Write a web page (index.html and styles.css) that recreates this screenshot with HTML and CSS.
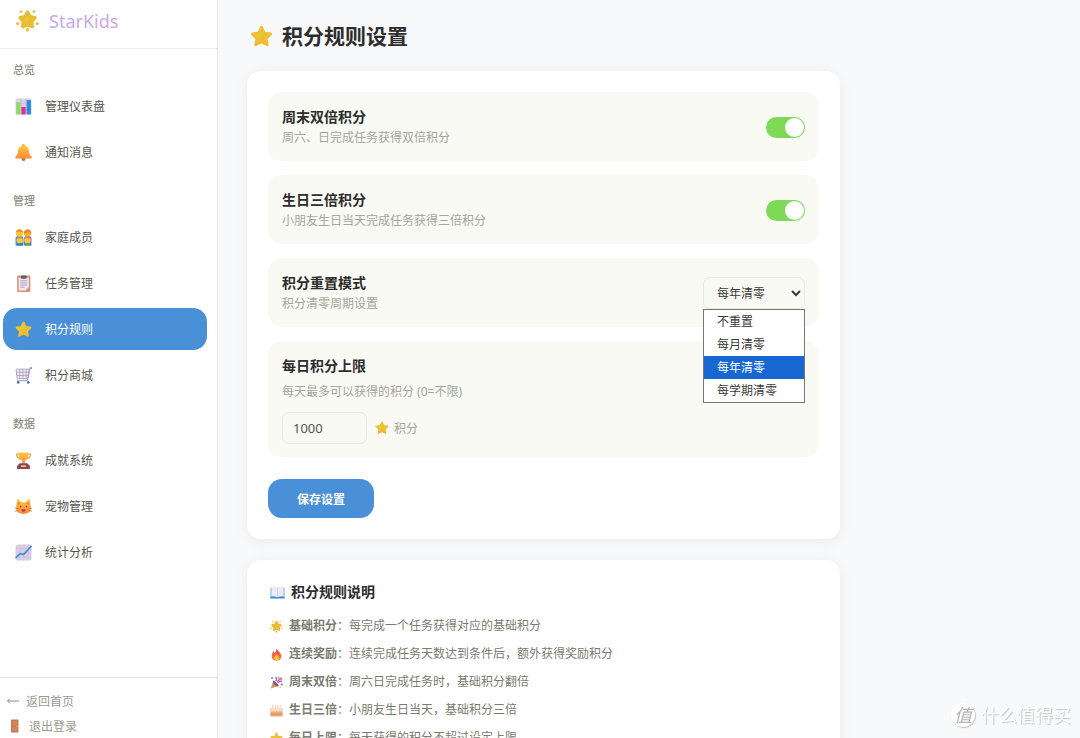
FILE: index.html
```html
<!DOCTYPE html>
<html lang="zh-CN">
<head>
    <meta charset="UTF-8">
    <meta name="viewport" content="width=device-width, initial-scale=1.0">
    <title>StarKids - 积分规则设置</title>
    <link rel="stylesheet" href="styles.css">
</head>
<body>
    <!-- 图标 -->
    <svg class="sprite" aria-hidden="true">
        <defs>
            <linearGradient id="gold" x1="0" y1="0" x2="1" y2="1">
                <stop offset="0" stop-color="#f3cf3c"/>
                <stop offset="0.6" stop-color="#e9bf33"/>
                <stop offset="1" stop-color="#f5b52a"/>
            </linearGradient>
            <linearGradient id="orange" x1="0" y1="0" x2="0" y2="1">
                <stop offset="0" stop-color="#ffc83d"/>
                <stop offset="1" stop-color="#f98a3c"/>
            </linearGradient>
            <linearGradient id="flame" x1="0" y1="0" x2="0" y2="1">
                <stop offset="0" stop-color="#e8404e"/>
                <stop offset="1" stop-color="#ff8a2b"/>
            </linearGradient>
        </defs>
        <symbol id="i-star" viewBox="0 0 32 32">
            <path d="M16 3.200l4 8 8.800 1.300-6.400 6.200 1.600 8.900-8-4.200-8 4.200 1.600-8.900-6.400-6.200 8.800-1.300z" fill="url(#gold)" stroke="#eec036" stroke-width="4" stroke-linejoin="round"/>
            <path d="M9 27l7-4 7 4" fill="none" stroke="#f3ae2d" stroke-width="1.500" stroke-linecap="round"/>
        </symbol>
        <symbol id="i-glow" viewBox="0 0 32 32">
            <path d="M16 4.500l3.500 6.300 6.800 1.400-4.600 5.200.8 7-6.500-2.800-6.500 2.800.8-7-4.600-5.200 6.800-1.400z" fill="url(#gold)" stroke="#e8bd36" stroke-width="5" stroke-linejoin="round"/>
            <g fill="#f5bd3b">
                <circle cx="7" cy="3.600" r="2"/><circle cx="25" cy="3.600" r="2"/>
                <ellipse cx="2.400" cy="20.500" rx="2.400" ry="1.900"/><ellipse cx="29.600" cy="20.500" rx="2.400" ry="1.900"/>
                <ellipse cx="16" cy="29" rx="2.200" ry="2.800"/>
            </g>
        </symbol>
        <symbol id="i-bars" viewBox="0 0 32 32">
            <rect x="1" y="1" width="30" height="30" rx="4" fill="#dcd3e6"/>
            <path d="M1 11h30M1 21h30M11 1v30M21 1v30" stroke="#b9aec9" stroke-width="1"/>
            <rect x="2" y="8" width="8" height="23" fill="#8ddc6c"/>
            <rect x="12" y="17" width="8" height="14" fill="#e0318c"/>
            <rect x="22" y="4" width="8" height="27" fill="#2a8be0"/>
        </symbol>
        <symbol id="i-bell" viewBox="0 0 32 32">
            <circle cx="16" cy="3" r="2.500" fill="#e98a35"/>
            <circle cx="16" cy="28" r="4" fill="#c9742f"/>
            <path d="M16 3C9.500 3 6 7.500 5.500 14c-.5 5-1.500 6.500-4.500 9.500-1 2 0 4 2 4h26c2 0 3-2 2-4-3-3-4-4.500-4.500-9.500C26 7.500 22.500 3 16 3z" fill="url(#orange)"/>
        </symbol>
        <symbol id="i-family" viewBox="0 0 32 32">
            <path d="M1 31V18q0-5 5-5h6q4 0 4 5v13z" fill="#2f9fd3"/>
            <path d="M17 31V18q0-5 4-5h5q5 0 5 5v13z" fill="#9a5bd0"/>
            <circle cx="8.500" cy="7.500" r="7" fill="#ffc73a"/><circle cx="23.500" cy="7.500" r="7" fill="#ffb23a"/>
            <path d="M2 6q1-6 7-5 5 0 6 5-6-3-13 0zM17 9V6q2-5 7-5 6 0 7 8-6-5-14 0z" fill="#e58a2d"/>
            <path d="M3 31q0-6 6-6t6 6z" fill="#2a7ac0"/><path d="M18 31q0-6 6-6t6 6z" fill="#3aa56b"/>
            <circle cx="9" cy="21" r="6" fill="#ffc73a"/><circle cx="23.500" cy="21" r="6" fill="#ffc73a"/>
            <path d="M3.500 19q5.500-8 11 0-5.500-3-11 0zM18 19q5.500-8 11 0-5.500-3-11 0z" fill="#d97b2c"/>
        </symbol>
        <symbol id="i-clip" viewBox="0 0 32 32">
            <rect x="4" y="1" width="25" height="31" rx="2" fill="#d8947c"/>
            <path d="M7 5h19v18l-6 6H7z" fill="#efe7f5"/>
            <path d="M26 23v6h-6z" fill="#e88b63"/>
            <rect x="11" y="1" width="11" height="6" rx="2" fill="#655b74"/>
            <path d="M10 11h13M10 15h13M10 19h13M10 23h8" stroke="#9e93b4" stroke-width="1.500"/>
        </symbol>
        <symbol id="i-cart" viewBox="0 0 32 32">
            <path d="M2 4h25l-3 18H4z" fill="#ece9f2" stroke="#a39bb3" stroke-width="1.500"/>
            <path d="M3 10h23M3 16h22M9 4v18M15 4v18M21 4v18" stroke="#a39bb3" stroke-width="1.300"/>
            <path d="M31 2h-3l-4 21q0 3-3 3H4" fill="none" stroke="#9a9bce" stroke-width="2"/>
            <circle cx="31" cy="2" r="1.500" fill="#3869c9"/>
            <circle cx="6" cy="29" r="2.500" fill="#5c68bd"/><circle cx="25" cy="29" r="2.500" fill="#5c68bd"/>
        </symbol>
        <symbol id="i-cup" viewBox="0 0 32 32">
            <path d="M8 4H3q0 8 8 9M24 4h5q0 8-8 9" fill="none" stroke="#efa23a" stroke-width="2.500"/>
            <path d="M7 1h18q1 12-6 15l-1 6h-4l-1-6Q6 13 7 1z" fill="url(#orange)"/>
            <path d="M9 21h14l5 5v6H4v-6z" fill="#87455e"/>
            <rect x="11" y="25" width="10" height="3" rx="1" fill="#f6c04a"/>
        </symbol>
        <symbol id="i-cat" viewBox="0 0 32 32">
            <path d="M4 3q1-2 3 0l5 5h8l5-5q2-2 3 0l2 15q0 12-14 12T2 18z" fill="url(#orange)"/>
            <path d="M6 7l4 4-4 2zM26 7l-4 4 4 2z" fill="#f0703c"/>
            <circle cx="10.500" cy="16" r="1.500" fill="#5a3a31"/><circle cx="21.500" cy="16" r="1.500" fill="#5a3a31"/>
            <path d="M12 21h8q0 5-4 5t-4-5z" fill="#c4304f"/>
            <path d="M0 19l7 1M0 25l7-2M32 19l-7 1M32 25l-7-2" stroke="#dd6c3c" stroke-width="1.500"/>
        </symbol>
        <symbol id="i-chart" viewBox="0 0 32 32">
            <rect x="1" y="1" width="30" height="30" rx="4" fill="#d9d0e6"/>
            <path d="M1 9h30M1 17h30M1 25h30M9 1v30M17 1v30M25 1v30" stroke="#c6bcd6" stroke-width="1"/>
            <path d="M1 26l9-8 6 2L31 4" fill="none" stroke="#3a8ed9" stroke-width="3"/>
        </symbol>
        <symbol id="i-door" viewBox="0 0 32 32">
            <rect x="8" y="1" width="17" height="30" rx="1" fill="#c8794f"/>
            <path d="M11 4h11v10H11zM11 17h11v11H11z" fill="#d18862"/>
            <circle cx="22.500" cy="16.500" r="1.500" fill="#efb36a"/>
        </symbol>
        <symbol id="i-book" viewBox="0 0 32 32">
            <path d="M1 8h30v22H1z" fill="#6cb2ea"/>
            <path d="M3 6q8-2 13 1 5-3 13-1v21q-8-1-13 2-5-3-13-2z" fill="#eeeaf7"/>
            <path d="M16 7v21" stroke="#cfc6e0" stroke-width="1.500"/>
            <path d="M1 27v4h30v-4q-9-1-15 1-6-2-15-1z" fill="#3b8ad3"/>
        </symbol>
        <symbol id="i-fire" viewBox="0 0 32 32">
            <path d="M16 1c2 6 12 9 12 19 0 7-5 11-12 11S4 27 4 20c0-5 3-8 4-12 2 1 3 3 3 5 3-3 5-7 5-12z" fill="url(#flame)"/>
            <path d="M16 15c1 4 6 5 6 10 0 4-3 5-6 5s-6-2-6-5c0-4 5-5 6-10z" fill="#ffc344"/>
        </symbol>
        <symbol id="i-party" viewBox="0 0 32 32">
            <path d="M8 11l14 13L2 31z" fill="#e2943c"/>
            <path d="M8 11q8 3 14 13-5 4-10-2-6-6-4-11z" fill="#5661b8"/>
            <path d="M14 13q4-5 0-11M19 18q3-6 11-5M18 14l9-10" fill="none" stroke="#d84c94" stroke-width="3"/>
            <circle cx="5" cy="5" r="2.500" fill="#39a0e6"/><circle cx="29" cy="21" r="2.500" fill="#e3508c"/>
            <circle cx="21" cy="4" r="2.500" fill="#8bcf5c"/><circle cx="28" cy="8" r="2.500" fill="#40a4e6"/><circle cx="25" cy="28" r="2" fill="#f6b63c"/>
        </symbol>
        <symbol id="i-cake" viewBox="0 0 32 32">
            <path d="M7 2v10M13 2v10M19 2v10M25 2v10" stroke="#dcc6a4" stroke-width="2"/>
            <rect x="1" y="10" width="30" height="21" rx="3" fill="#edaa7c"/>
            <path d="M1 17v-3q0-4 4-4h22q4 0 4 4v3q-3 4-7 0-4 4-8 0-4 4-8 0-4 4-7 0z" fill="#fbdcc0"/>
            <path d="M1 25h30" stroke="#dd8c68" stroke-width="2.500"/>
        </symbol>
    </svg>

    <div class="layout">
        <aside class="sidebar">
            <div class="brand">
                <svg class="brand-icon"><use href="#i-glow"/></svg>
                <span>StarKids</span>
            </div>
            <nav class="nav">
                <div class="nav-label">总览</div>
                <a href="#" class="nav-item"><svg><use href="#i-bars"/></svg>管理仪表盘</a>
                <a href="#" class="nav-item"><svg><use href="#i-bell"/></svg>通知消息</a>
                <div class="nav-label">管理</div>
                <a href="#" class="nav-item"><svg><use href="#i-family"/></svg>家庭成员</a>
                <a href="#" class="nav-item"><svg><use href="#i-clip"/></svg>任务管理</a>
                <a href="#" class="nav-item active"><svg><use href="#i-star"/></svg>积分规则</a>
                <a href="#" class="nav-item"><svg><use href="#i-cart"/></svg>积分商城</a>
                <div class="nav-label">数据</div>
                <a href="#" class="nav-item"><svg><use href="#i-cup"/></svg>成就系统</a>
                <a href="#" class="nav-item"><svg><use href="#i-cat"/></svg>宠物管理</a>
                <a href="#" class="nav-item"><svg><use href="#i-chart"/></svg>统计分析</a>
            </nav>
            <div class="sidebar-footer">
                <a href="#">
                    <svg class="arrow" viewBox="0 0 14 14"><path d="M13 7H1.500M4 4.500L1.500 7 4 9.500" fill="none" stroke="#8f8f85"/></svg>返回首页
                </a>
                <a href="#"><svg class="door"><use href="#i-door"/></svg>退出登录</a>
            </div>
        </aside>

        <main class="main">
            <h1 class="page-title"><svg><use href="#i-star"/></svg>积分规则设置</h1>

            <form class="card">
                <div class="setting">
                    <div>
                        <label class="setting-title" for="weekend">周末双倍积分</label>
                        <p class="setting-desc">周六、日完成任务获得双倍积分</p>
                    </div>
                    <input type="checkbox" class="toggle" id="weekend" checked>
                </div>
                <div class="setting">
                    <div>
                        <label class="setting-title" for="birthday">生日三倍积分</label>
                        <p class="setting-desc">小朋友生日当天完成任务获得三倍积分</p>
                    </div>
                    <input type="checkbox" class="toggle" id="birthday" checked>
                </div>
                <div class="setting">
                    <div>
                        <label class="setting-title" for="reset">积分重置模式</label>
                        <p class="setting-desc">积分清零周期设置</p>
                    </div>
                    <div class="select-wrap">
                        <select class="select" id="reset">
                            <option>不重置</option>
                            <option>每月清零</option>
                            <option selected>每年清零</option>
                            <option>每学期清零</option>
                        </select>
                        <ul class="select-menu" role="listbox" aria-label="积分重置模式">
                            <li role="option">不重置</li>
                            <li role="option">每月清零</li>
                            <li role="option" aria-selected="true" class="selected">每年清零</li>
                            <li role="option">每学期清零</li>
                        </ul>
                    </div>
                </div>
                <div class="setting setting-block">
                    <label class="setting-title" for="limit">每日积分上限</label>
                    <p class="setting-desc">每天最多可以获得的积分 (0=不限)</p>
                    <div class="limit-row">
                        <input type="text" inputmode="numeric" class="limit-input" id="limit" value="1000">
                        <svg><use href="#i-star"/></svg>
                        <span>积分</span>
                    </div>
                </div>
                <button type="button" class="save-btn">保存设置</button>
            </form>

            <section class="card">
                <h2 class="card-title"><svg><use href="#i-book"/></svg>积分规则说明</h2>
                <ul class="rules">
                    <li><svg><use href="#i-glow"/></svg><strong>基础积分</strong>：每完成一个任务获得对应的基础积分</li>
                    <li><svg><use href="#i-fire"/></svg><strong>连续奖励</strong>：连续完成任务天数达到条件后，额外获得奖励积分</li>
                    <li><svg><use href="#i-party"/></svg><strong>周末双倍</strong>：周六日完成任务时，基础积分翻倍</li>
                    <li><svg><use href="#i-cake"/></svg><strong>生日三倍</strong>：小朋友生日当天，基础积分三倍</li>
                    <li><svg><use href="#i-star"/></svg><strong>每日上限</strong>：每天获得的积分不超过设定上限</li>
                </ul>
            </section>
        </main>
    </div>

    <div class="watermark"><span class="watermark-logo">值</span>什么值得买</div>
</body>
</html>
```
FILE: styles.css
```css
* {
    box-sizing: border-box;
    margin: 0;
    padding: 0;
}
body {
    background-color: #f8f9fb;
    color: #2d2d2d;
    font-family: "Noto Sans", "Noto Sans CJK SC", sans-serif;
    font-size: 12px;
}
a {
    color: inherit;
    text-decoration: none;
}
ul {
    list-style: none;
}
svg {
    flex-shrink: 0;
}
.sprite {
    position: absolute;
    width: 0;
    height: 0;
}
.layout {
    display: flex;
    height: 100vh;
}

/* 侧边栏 */
.sidebar {
    display: flex;
    flex-direction: column;
    flex-shrink: 0;
    width: 218px;
    background-color: #fff;
    border-right: 1px solid #ebebeb;
}
.brand {
    display: flex;
    align-items: center;
    gap: 10px;
    height: 49px;
    padding: 0 16px 7px;
    border-bottom: 1px solid #ebebe6;
    color: #c9a8ea;
    font-size: 18px;
}
.brand-icon {
    width: 23px;
    height: 23px;
}
.nav {
    flex: 1;
    display: flex;
    flex-direction: column;
    gap: 4px;
    padding: 13px 10px 0 3px;
}
.nav-label {
    padding-left: 10px;
    margin-bottom: 3px;
    color: #8f8f85;
    font-size: 11px;
    font-weight: 500;
    line-height: 16px;
}
.nav-item + .nav-label {
    margin-top: 16px;
}
.nav-item {
    display: flex;
    align-items: center;
    gap: 13px;
    height: 42px;
    padding-left: 12px;
    border-radius: 14px;
    color: #55554d;
}
.nav-item svg {
    width: 17px;
    height: 17px;
}
.nav-item.active {
    background-color: #4a90d9;
    color: #fff;
}
.sidebar-footer {
    padding: 10px 6px 0;
    border-top: 1px solid #e6e6e0;
    color: #9a9a90;
}
.sidebar-footer a {
    display: flex;
    align-items: center;
    gap: 6px;
    height: 25px;
}
.arrow {
    width: 14px;
    height: 14px;
}
.door {
    width: 17px;
    height: 14px;
}

/* 主内容 */
.main {
    flex: 1;
    padding: 20px 29px;
    overflow-y: auto;
    scrollbar-width: none;
}
.page-title {
    display: flex;
    align-items: center;
    gap: 9px;
    padding-left: 3px;
    margin-bottom: 19px;
    font-size: 21px;
    line-height: 32px;
}
.page-title svg {
    width: 23px;
    height: 23px;
}
.card {
    max-width: 593px;
    padding: 21px;
    margin-bottom: 21px;
    background-color: #fff;
    border-radius: 14px;
    box-shadow: 0 2px 14px rgba(0, 0, 0, 0.06);
}
.setting {
    display: flex;
    align-items: center;
    justify-content: space-between;
    padding: 14px 14px 13px;
    margin-bottom: 14px;
    background-color: #f9faf4;
    border-radius: 14px;
    line-height: 21px;
}
.setting-title {
    display: block;
    font-size: 14px;
    font-weight: 600;
}
.setting-desc {
    color: #a5a59b;
    line-height: 22px;
    margin-bottom: -1px;
}
.toggle {
    appearance: none;
    width: 39px;
    height: 21px;
    padding: 1px;
    background-color: #ccc;
    border-radius: 11px;
    cursor: pointer;
}
.toggle::before {
    content: "";
    display: block;
    width: 19px;
    height: 19px;
    background-color: #fff;
    border-radius: 50%;
}
.toggle:checked {
    background-color: #7ed957;
}
.toggle:checked::before {
    margin-left: auto;
}
.select-wrap {
    position: relative;
    width: 102px;
}
.select {
    display: block;
    width: 100%;
    height: 32px;
    padding: 0 9px;
    background-color: #f9faf4;
    border: 1px solid #e9eae4;
    border-radius: 7px;
    color: #3a3a36;
    font: inherit;
}
.select-menu {
    position: absolute;
    top: 100%;
    left: 0;
    right: 0;
    background-color: #fff;
    border: 1px solid #767676;
    color: #3a3a36;
}
.select-menu li {
    padding-left: 13px;
    line-height: 23px;
}
.select-menu .selected {
    background-color: #1967d2;
    color: #fff;
}
.setting-block {
    display: block;
    margin-bottom: 22px;
}
.setting-block .setting-desc {
    margin: 5px 0 9px;
}
.limit-row {
    display: flex;
    align-items: center;
    color: #a5a59b;
}
.limit-row svg {
    width: 14px;
    height: 14px;
    margin: 0 5px 0 8px;
}
.limit-input {
    width: 85px;
    height: 32px;
    padding: 0 10px;
    background-color: #f9faf4;
    border: 1px solid #e9eae4;
    border-radius: 7px;
    color: #55554d;
    font: inherit;
    font-size: 13px;
}
.save-btn {
    display: block;
    height: 39px;
    padding: 0 29px;
    background-color: #4a90d9;
    border: none;
    border-radius: 14px;
    color: #fff;
    font: inherit;
    font-weight: 700;
    cursor: pointer;
}
.card-title {
    display: flex;
    align-items: center;
    gap: 6px;
    padding-left: 2px;
    margin-bottom: 10px;
    font-size: 14px;
    font-weight: 600;
    line-height: 21px;
}
.card-title svg {
    width: 15px;
    height: 15px;
}
.rules {
    padding-left: 2px;
    color: #7b7b70;
}
.rules li {
    display: flex;
    align-items: center;
    line-height: 28px;
}
.rules svg {
    width: 13px;
    height: 13px;
    margin-right: 6px;
}

/* 水印 */
.watermark {
    position: fixed;
    right: 9px;
    bottom: 11px;
    display: flex;
    align-items: center;
    gap: 6px;
    color: #fff;
    font-size: 18px;
    line-height: 24px;
    text-shadow: 1px 1px 1px #c4c4c4;
}
.watermark-logo {
    width: 24px;
    height: 24px;
    background-color: #fff;
    border-radius: 50%;
    box-shadow: 1px 1px 1px #c4c4c4;
    color: #b5b5b5;
    font-style: italic;
    text-align: center;
    text-shadow: none;
}
```
